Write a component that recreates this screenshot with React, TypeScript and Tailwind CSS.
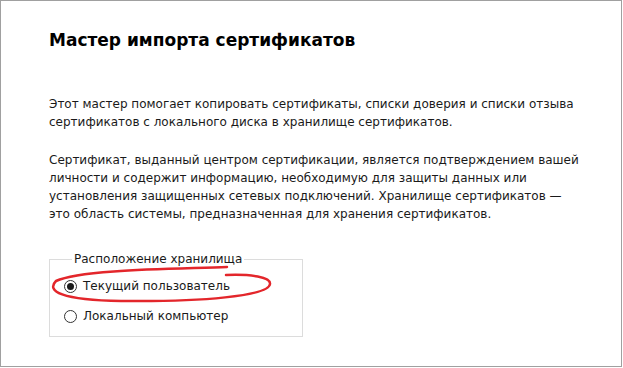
import React from 'react';

const font = { fontFamily: '"DejaVu Sans", Tahoma, sans-serif' };

const Radio = ({ checked, label }: { checked?: boolean; label: string }) => (
  <label className="flex items-center h-[30px]">
    <span className="w-[13px] h-[13px] rounded-full border border-[#333] bg-white flex items-center justify-center">
      {checked && <span className="w-[7px] h-[7px] rounded-full bg-[#1a1a1a]" />}
    </span>
    <span className="ml-[6px]">{label}</span>
  </label>
);

export default function App() {
  return (
    <div className="relative w-[622px] h-[367px] border border-[#a0a0a0] bg-white text-[#1a1a1a] text-[12px] leading-[18px]" style={font}>
      <div className="pl-[48px] pt-[28px]">
        <h1 className="text-[17px] leading-[22px] font-bold text-black">Мастер импорта сертификатов</h1>

        <p className="mt-[44px] w-[540px]">
          Этот мастер помогает копировать сертификаты, списки доверия и списки отзыва сертификатов с локального диска в хранилище сертификатов.
        </p>

        <p className="mt-[20px] w-[540px]">
          Сертификат, выданный центром сертификации, является подтверждением вашей личности и содержит информацию, необходимую для защиты данных или установления защищенных сетевых подключений. Хранилище сертификатов —
          <br />
          это область системы, предназначенная для хранения сертификатов.
        </p>

        <fieldset className="mt-[27px] w-[254px] border border-[#dcdcdc] pl-[14px] pt-[3px] pb-[5px]">
          <legend className="ml-[8px] px-[2px]">Расположение хранилища</legend>
          <Radio checked label="Текущий пользователь" />
          <Radio label="Локальный компьютер" />
        </fieldset>
      </div>

      {/* hand-drawn highlight */}
      <svg className="absolute left-0 top-0 pointer-events-none" width="622" height="367">
        <path
          d="M 226 266 C 180 268, 80 268, 55 280 C 45 290, 60 299, 120 300 C 200 301, 268 295, 269 283 C 270 276, 250 273, 225 274"
          fill="none"
          stroke="#e3262b"
          strokeWidth="2.5"
          strokeLinecap="round"
        />
      </svg>
    </div>
  );
}
